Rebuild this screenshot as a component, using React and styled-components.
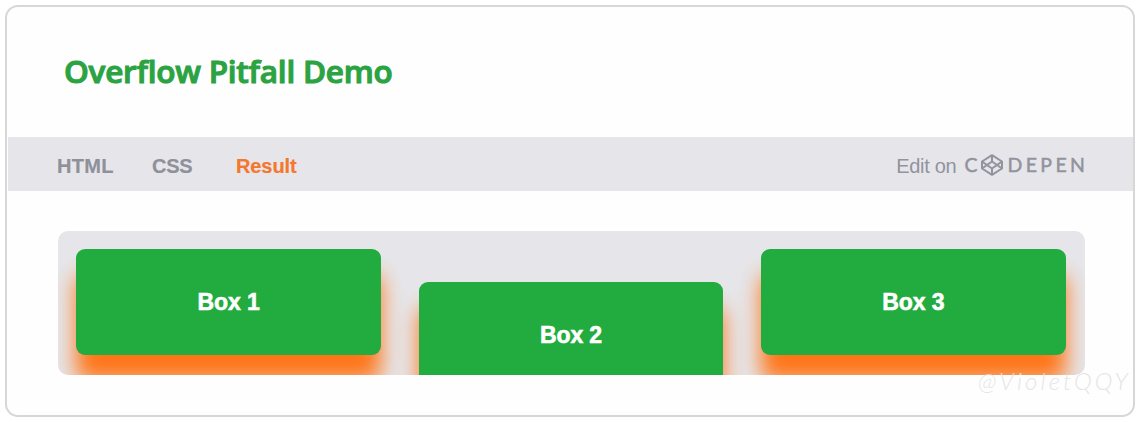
import React from "react";
import styled, { createGlobalStyle } from "styled-components";

const GlobalStyle = createGlobalStyle`
  *, *::before, *::after { box-sizing: border-box; }
  body { margin: 0; background: #fff; }
`;

const Page = styled.main`
  position: relative;
  width: 1140px;
  height: 422px;
  padding: 5px 5px 5px 5px;
  overflow: hidden;
  font-family: "Liberation Sans", Arial, sans-serif;
`;

const Card = styled.section`
  height: 412px;
  border: 2px solid #d7d7d8;
  border-radius: 13px;
  background: #fefefe;
  padding-left: 1px;
`;

const Title = styled.h1`
  margin: 0;
  height: 130px;
  padding: 0 0 3px 56px;
  display: flex;
  align-items: center;
  color: #2ba343;
  font: 600 31.5px/40px "Open Sans", sans-serif;
  letter-spacing: -0.22px;
  -webkit-text-stroke: 1.1px currentColor;
  white-space: nowrap;
`;

const Toolbar = styled.nav`
  height: 54px;
  padding: 3px 48px 0 49px;
  display: flex;
  align-items: center;
  justify-content: space-between;
  background: #e6e6ea;
`;

const Tabs = styled.div`
  display: flex;
`;

const Tab = styled.span`
  width: ${(p) => p.$width}px;
  color: ${(p) => (p.$active ? "#f4772f" : "#8f909b")};
  font-size: 20px;
  line-height: 24px;
  font-weight: 700;
  letter-spacing: ${(p) => p.$tracking ?? 0}px;
  -webkit-text-stroke: 0.2px currentColor;
`;

const EditLink = styled.a`
  display: flex;
  align-items: center;
  color: #92939e;
  font-size: 20px;
  line-height: 24px;
  letter-spacing: -0.3px;
`;

const Wordmark = styled.span`
  display: flex;
  align-items: center;
  margin-left: 8px;
  height: 24px;
  font: 400 19.5px/24px Lato, sans-serif;
`;

const Letters = styled.span`
  letter-spacing: 3.4px;
  margin-right: -3.4px;
  margin-top: -2px;
  -webkit-text-stroke: 0.5px currentColor;
`;

const Cube = styled.svg`
  width: 24px;
  height: 24px;
  margin: -2px 3px 0 3px;
  fill: none;
  stroke: currentColor;
  stroke-width: 2;
  stroke-linejoin: round;
`;

const Stage = styled.div`
  display: flex;
  gap: 38px;
  height: 143.5px;
  margin: 40px 48px 0 50px;
  padding: 18px 19.4px 0 18.4px;
  border-radius: 10px;
  background: #e6e6ea;
  overflow: hidden;
`;

const Box = styled.div`
  flex: 1;
  height: 105.5px;
  margin-top: ${(p) => (p.$lowered ? 33 : 0)}px;
  padding-top: 1px;
  border-radius: 9px;
  background: #22ab3e;
  box-shadow: 0 26px 21px #ff7518;
  display: flex;
  align-items: center;
  justify-content: center;
  color: #fff;
  font-size: 23px;
  font-weight: 700;
  letter-spacing: -0.1px;
  -webkit-text-stroke: 0.6px #fff;
`;

const Watermark = styled.span`
  position: absolute;
  left: 978px;
  top: 366px;
  color: rgba(226, 226, 226, 0.9);
  font: italic 300 24px/30px Lato, sans-serif;
  letter-spacing: 3.1px;
  white-space: nowrap;
`;

const boxes = [
  { label: "Box 1" },
  { label: "Box 2", lowered: true },
  { label: "Box 3" },
];

export default function App() {
  return (
    <>
      <GlobalStyle />
      <Page>
        <Card>
          <Title>Overflow Pitfall Demo</Title>
          <Toolbar>
            <Tabs>
              <Tab $width={95} $tracking={0.3}>HTML</Tab>
              <Tab $width={84} $tracking={-0.3}>CSS</Tab>
              <Tab $width={62} $tracking={-0.1} $active>Result</Tab>
            </Tabs>
            <EditLink>
              Edit on
              <Wordmark>
                <Letters>C</Letters>
                <Cube viewBox="0 0 24 24">
                  <path d="M12 2.2 22 8.5v7L12 21.8 2 15.5v-7Z" />
                  <path d="M12 2.2v6.3M12 15.5v6.3M2 8.5l10 7 10-7M2 15.5l10-7 10 7" />
                </Cube>
                <Letters>DEPEN</Letters>
              </Wordmark>
            </EditLink>
          </Toolbar>
          <Stage>
            {boxes.map((box) => (
              <Box key={box.label} $lowered={box.lowered}>{box.label}</Box>
            ))}
          </Stage>
        </Card>
        <Watermark>@VioletQQY</Watermark>
      </Page>
    </>
  );
}
